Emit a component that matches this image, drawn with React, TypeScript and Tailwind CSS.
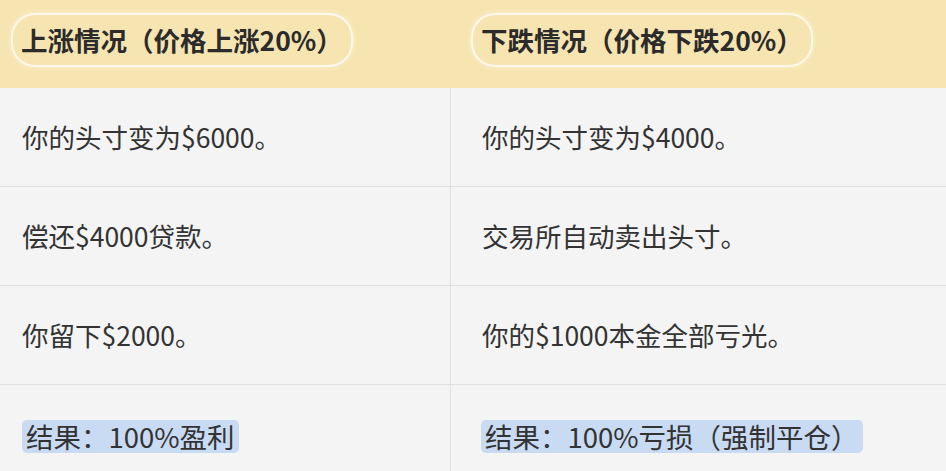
import React from "react";

const rows: Array<[string, string]> = [
  ["你的头寸变为$6000。", "你的头寸变为$4000。"],
  ["偿还$4000贷款。", "交易所自动卖出头寸。"],
  ["你留下$2000。", "你的$1000本金全部亏光。"],
];

const font = { fontFamily: '"Noto Sans CJK SC", "Noto Sans", sans-serif' };

function HeadPill({ text }: { text: string }) {
  return (
    <span className="rounded-[22px] px-[8px] py-[5px] text-[26.5px] font-bold text-[#2b2b2b] shadow-[0_0_0_2px_rgba(255,255,255,0.65),0_0_5px_2px_rgba(255,255,255,0.45)]">
      {text}
    </span>
  );
}

export default function App() {
  return (
    <div className="w-[946px] h-[471px] overflow-hidden bg-[#f4f4f4]" style={font}>
      <div className="grid grid-cols-[451px_1fr] bg-[#f7e5b1]">
        <div className="flex items-center h-[88px] pl-[13px] pb-[8px]">
          <HeadPill text="上涨情况（价格上涨20%）" />
        </div>
        <div className="flex items-center h-[88px] pl-[22px] pb-[8px]">
          <HeadPill text="下跌情况（价格下跌20%）" />
        </div>
      </div>
      <div className="grid grid-cols-[451px_1fr]">
        {rows.map(([l, r], i) => (
          <React.Fragment key={i}>
            <div className="flex items-center h-[99px] pl-[22px] border-b border-r border-[#e0e0e0] text-[26.5px] text-[#333]">
              {l}
            </div>
            <div className="flex items-center h-[99px] pl-[31px] border-b border-[#e0e0e0] text-[26.5px] text-[#333]">
              {r}
            </div>
          </React.Fragment>
        ))}
        <div className="flex items-center h-[104px] pl-[22px] pb-[2px] border-r border-[#e0e0e0] text-[27.5px] text-[#333]">
          <span className="rounded-[5px] bg-[#c9dbf3] px-[4px] leading-[33px]">结果：100%盈利</span>
        </div>
        <div className="flex items-center h-[104px] pl-[30px] pb-[2px] text-[27.5px] text-[#333]">
          <span className="rounded-[5px] bg-[#c9dbf3] px-[4px] leading-[33px]">结果：100%亏损（强制平仓）</span>
        </div>
      </div>
    </div>
  );
}
